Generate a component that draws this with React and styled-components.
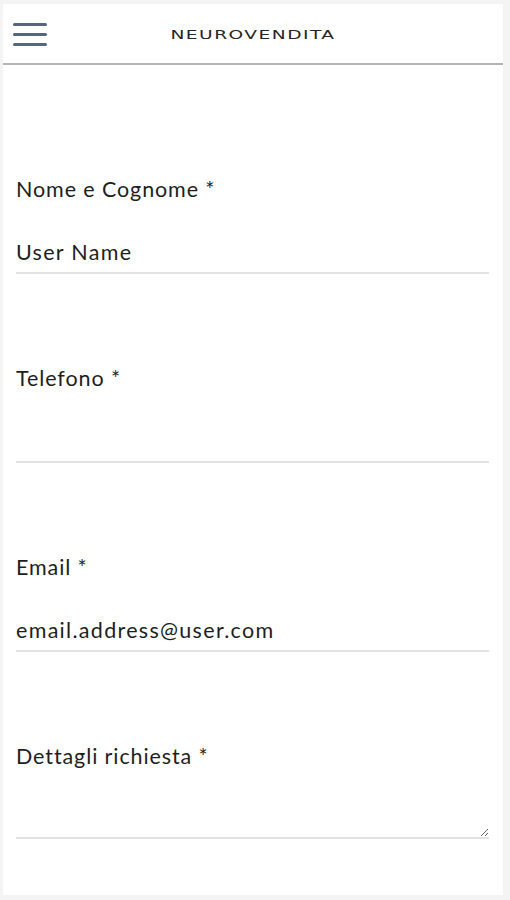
import React from "react";
import styled, { createGlobalStyle } from "styled-components";

const GlobalStyle = createGlobalStyle`
  body {
    margin: 0;
    background: #f4f4f4;
    font-family: Lato, "Liberation Sans", sans-serif;
  }
`;

export default function App() {
  return (
    <>
      <GlobalStyle />
      <StPage>
        <StHeader>
          <StMenuBtn aria-label="menu">
            <span />
            <span />
            <span />
          </StMenuBtn>
          <StLogo>NEUROVENDITA</StLogo>
        </StHeader>
        <StForm onSubmit={(e) => e.preventDefault()}>
          <StField first>
            <StLabel>Nome e Cognome *</StLabel>
            <StInput type="text" defaultValue="User Name" />
          </StField>
          <StField>
            <StLabel>Telefono *</StLabel>
            <StInput type="tel" />
          </StField>
          <StField>
            <StLabel>Email *</StLabel>
            <StInput type="email" defaultValue="email.address@user.com" />
          </StField>
          <StField>
            <StLabel>Dettagli richiesta *</StLabel>
            <StTextarea />
          </StField>
        </StForm>
      </StPage>
    </>
  );
}

const StPage = styled.div`
  margin: 4px 0 0 3px;
  width: 500px;
  height: 891px;
  background: #fff;
  display: flex;
  flex-direction: column;
  overflow: hidden;
`;

const StHeader = styled.header`
  height: 59px;
  border-bottom: 2px solid #b4b4b4;
  display: flex;
  align-items: center;
  position: relative;
`;

const StMenuBtn = styled.button`
  margin: 1px 0 0 10px;
  width: 34px;
  padding: 0;
  border: none;
  background: none;
  display: flex;
  flex-direction: column;
  gap: 7px;

  span {
    display: block;
    height: 3px;
    border-radius: 2px;
    background: #56677d;
  }
`;

const StLogo = styled.span`
  position: absolute;
  left: 50%;
  top: 25px;
  transform: translateX(-50%) scaleX(1.62);
  font-family: "DejaVu Sans", sans-serif;
  font-size: 11.5px;
  line-height: 13px;
  letter-spacing: 0.9px;
  color: #262626;
  white-space: nowrap;
  pointer-events: none;
`;

const StForm = styled.form`
  padding: 0 14px 0 13px;
  display: flex;
  flex-direction: column;
`;

const StField = styled.div`
  margin-top: ${(p) => (p.first ? "109px" : "89px")};
  display: flex;
  flex-direction: column;
`;

const StLabel = styled.label`
  font-size: 21.5px;
  line-height: 30px;
  letter-spacing: 0.9px;
  color: #1e1e1e;
`;

const StInput = styled.input`
  box-sizing: border-box;
  margin-top: 33px;
  height: 37px;
  padding: 0 0 5px;
  border: none;
  border-bottom: 2px solid #e2e2e2;
  outline: none;
  font-family: Lato, "Liberation Sans", sans-serif;
  font-size: 21.5px;
  letter-spacing: 1.3px;
  color: #1e1e1e;
  background: transparent;
`;

const StTextarea = styled.textarea`
  box-sizing: border-box;
  margin-top: 31px;
  height: 37px;
  padding: 0 0 5px;
  border: none;
  border-bottom: 2px solid #e2e2e2;
  outline: none;
  font-family: Lato, "Liberation Sans", sans-serif;
  font-size: 21.5px;
  color: #1e1e1e;
  background: transparent;
`;
